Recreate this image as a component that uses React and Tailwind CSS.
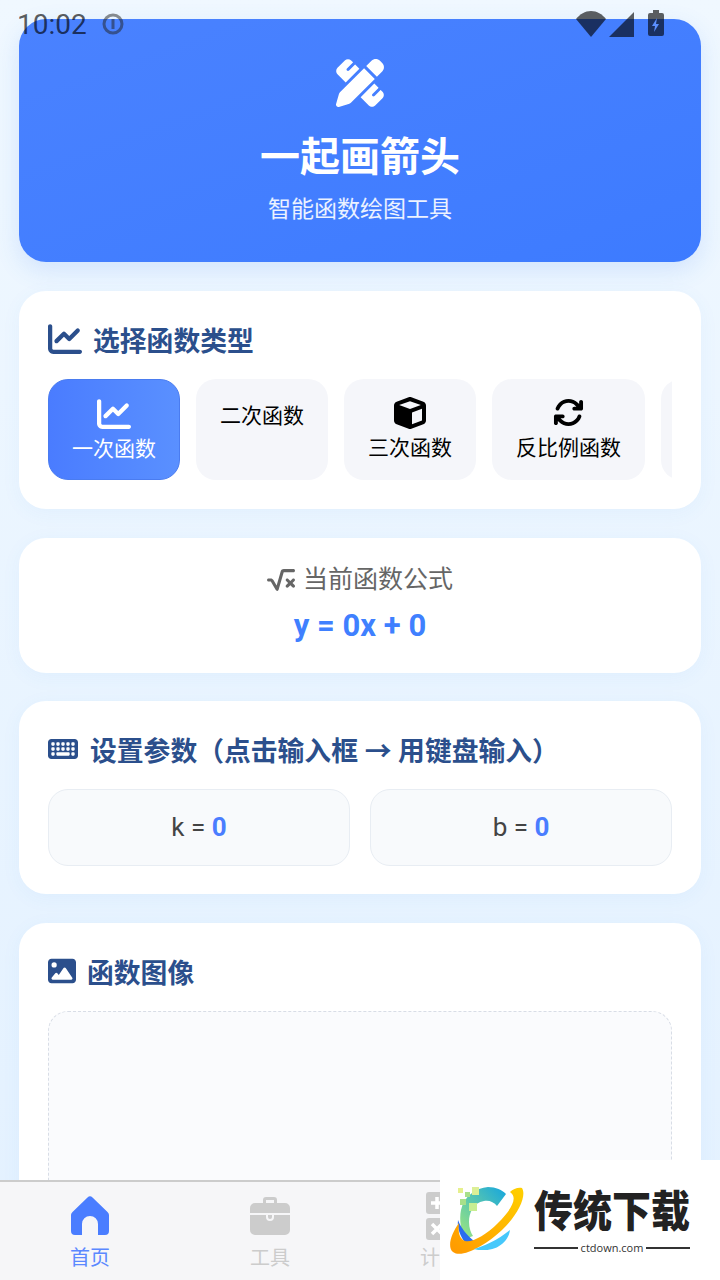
import React from 'react';
import {
  FaPenRuler,
  FaChartLine,
  FaCube,
  FaArrowsRotate,
  FaSquareRootVariable,
  FaKeyboard,
  FaImage,
} from 'react-icons/fa6';

const fontStack = "font-['Roboto','Noto_Sans_CJK_SC',sans-serif]";

const chips = [
  { label: '一次函数', Icon: FaChartLine, iconClass: 'w-[34px] h-[34px] mb-[4px]', active: true, width: 'w-[132px]' },
  { label: '二次函数', width: 'w-[132px]' },
  { label: '三次函数', Icon: FaCube, iconClass: 'w-[32px] h-[32px] my-[1px] mb-[5px]', width: 'w-[132px]' },
  { label: '反比例函数', Icon: FaArrowsRotate, iconClass: 'w-[31px] h-[31px] mt-[1px] mb-[6px]', width: 'w-[153px]' },
  { label: '', width: 'w-[132px]' },
];

// Status bar sits over the page content
const StatusBar = () => (
  <div className="absolute top-0 left-0 right-0 h-[50px] z-10">
    <div className="absolute left-[17px] top-[8px] text-[28px] leading-[34px] text-black/65 font-['Roboto',sans-serif]">10:02</div>
    <svg className="absolute left-[102px] top-[13px] opacity-50" width="22" height="22" viewBox="0 0 22 22" fill="none">
      <circle cx="11" cy="11" r="9" stroke="#222" strokeWidth="3" />
      <rect x="9.5" y="6" width="3" height="10" fill="#222" />
    </svg>
    <svg className="absolute left-[576px] top-[11px]" width="30" height="26" viewBox="0 0 30 26">
      <path d="M0 8C4 3 9 0 15 0s11 3 15 8L15 26Z" fill="#000" fillOpacity="0.62" />
    </svg>
    <svg className="absolute left-[609px] top-[12px]" width="25" height="25" viewBox="0 0 25 25">
      <path d="M25 0V25H0Z" fill="#000" fillOpacity="0.62" />
    </svg>
    <svg className="absolute left-[648px] top-[10px]" width="16" height="26" viewBox="0 0 16 26">
      <path d="M5 0h6v3h3a2 2 0 0 1 2 2v19a2 2 0 0 1-2 2H2a2 2 0 0 1-2-2V5a2 2 0 0 1 2-2h3Z" fill="#000" fillOpacity="0.62" />
      <path d="M9 8 4 16h3l-1 6 5-8H8Z" fill="#5b8fff" />
    </svg>
  </div>
);

const SectionTitle = ({ Icon, iconClass, gap, children }) => (
  <div className={`flex items-center ${gap} text-[#2b4f8c] text-[26.8px] leading-[34px] font-bold`}>
    <Icon className={iconClass} />
    <span className="whitespace-nowrap translate-y-[1px]">{children}</span>
  </div>
);

const Chip = ({ label, Icon, iconClass, active, width }) => (
  <div
    className={`${width} shrink-0 h-[101px] rounded-[20px] flex flex-col items-center pt-[17px] text-[21px] leading-[28px] ${
      active
        ? 'bg-gradient-to-r from-[#4a7cff] to-[#5a90ff] border border-[#4a7cf0] text-white'
        : 'bg-[#f5f6fa] text-black'
    }`}
  >
    {Icon ? <Icon className={iconClass} /> : <div className="h-[6px]" />}
    {label && <span>{label}</span>}
  </div>
);

const ParamBox = ({ name }) => (
  <div className="flex-1 h-[77px] rounded-[20px] bg-[#f8fafc] border border-[#e8edf3] flex items-center justify-center text-[26px] text-[#444]">
    <span>{name} =&nbsp;</span>
    <span className="font-bold text-[#4a7dff]">0</span>
  </div>
);

const HomeIcon = () => (
  <svg width="40" height="40" viewBox="0 0 40 40">
    <path
      d="M17.5 1.5a3.5 3.5 0 0 1 5 0l15 14.5a4 4 0 0 1 1.5 3.2V35a4 4 0 0 1-4 4h-7V28a8 8 0 0 0-16 0v11H5a4 4 0 0 1-4-4V19.2A4 4 0 0 1 2.5 16Z"
      fill="#4a7dff"
    />
  </svg>
);

const ToolIcon = () => (
  <svg width="40" height="38" viewBox="0 0 40 38">
    <path d="M13 6V3a3 3 0 0 1 3-3h8a3 3 0 0 1 3 3v3h8a5 5 0 0 1 5 5v5H0v-5a5 5 0 0 1 5-5Zm3-3v3h8V3Z" fill="#ccc" fillRule="evenodd" />
    <path d="M0 18h16v2a4 4 0 0 0 8 0v-2h16v15a5 5 0 0 1-5 5H5a5 5 0 0 1-5-5Z" fill="#ccc" />
    <path d="M18 18h4v2a2 2 0 0 1-4 0Z" fill="#ccc" />
  </svg>
);

const CalcIcon = () => (
  <svg width="48" height="48" viewBox="0 0 48 48">
    <rect x="0" y="0" width="22" height="22" rx="3" fill="#ccc" />
    <rect x="26" y="0" width="22" height="22" rx="3" fill="#ccc" />
    <rect x="0" y="26" width="22" height="22" rx="3" fill="#ccc" />
    <rect x="26" y="26" width="22" height="22" rx="3" fill="#ccc" />
    <path d="M11 5v12M5 11h12M6 32l10 10M16 32 6 42" stroke="#fff" strokeWidth="3.5" />
  </svg>
);

const Tab = ({ icon, label, active }) => (
  <div className={`w-[180px] flex flex-col items-center pt-[13px] ${active ? 'text-[#5b88ff]' : 'text-[#ccc]'}`}>
    <div className="h-[42px] flex items-center">{icon}</div>
    <span className="mt-[7px] text-[20px] leading-[28px]">{label}</span>
  </div>
);

// Site badge that covers the bottom right corner of the screenshot
const Watermark = () => (
  <div className="absolute right-0 bottom-0 w-[280px] h-[120px] bg-white z-20 flex items-center pl-[10px] pt-[6px]">
    <svg width="74" height="70" viewBox="0 0 74 70" className="shrink-0 mt-[-4px]">
      <defs>
        <linearGradient id="ring" x1="0" y1="1" x2="1" y2="0">
          <stop offset="0" stopColor="#a0e87c" />
          <stop offset="1" stopColor="#14a5e0" />
        </linearGradient>
        <linearGradient id="orange" x1="0" y1="1" x2="1" y2="0">
          <stop offset="0" stopColor="#ff9800" />
          <stop offset="1" stopColor="#ffd000" />
        </linearGradient>
      </defs>
      <path d="M11 24C14 10 26 2 38 1c8 0 14 3 18 7L47 20c-3-4-8-6-13-5-11 2-15 12-15 21 0 6 2 11 4 14L15 53C11 45 9 34 11 24Z" fill="url(#ring)" />
      <path d="M8 34c3 8 8 14 16 21l-8 3C10 50 7 42 8 34Z" fill="#2a6cf0" />
      <path d="M72 2c5 8-4 27-20 42C36 59 12 73 3 66c-6-5-2-18 6-29-1 9 0 15 6 18 7 2 21-6 33-18C60 25 69 12 60 6c3-3 8-5 12-4Z" fill="url(#orange)" />
      <path d="M60 44c-1 10-11 20-25 20-5 0-9 0-11-1 8-2 24-9 36-19Z" fill="#46c8fb" />
      <rect x="8" y="2" width="5" height="5" fill="#e6f08e" />
      <rect x="15" y="6" width="5" height="5" fill="#a8e08a" />
      <rect x="22" y="1" width="7" height="8" fill="#dcef96" />
      <rect x="10" y="13" width="6" height="6" fill="#a8e08a" />
      <rect x="19" y="17" width="8" height="8" fill="#c8ee92" />
    </svg>
    <div className="ml-[10px] w-[156px] flex flex-col items-center mt-[-2px]">
      <div className="text-[39px] leading-[46px] font-black text-[#222] whitespace-nowrap scale-y-[1.12]">传统下载</div>
      <div className="w-full flex items-center gap-[3px] mt-[6px]">
        <div className="flex-1 h-[2px] bg-[#333]" />
        <span className="text-[11px] leading-[14px] text-[#333] font-['Open_Sans',sans-serif]">ctdown.com</span>
        <div className="flex-1 h-[2px] bg-[#333]" />
      </div>
    </div>
  </div>
);

const App = () => {
  return (
    <div className={`${fontStack} relative w-[720px] h-[1280px] overflow-hidden flex flex-col bg-gradient-to-b from-[#f0f8ff] to-[#e3f1ff]`}>
      <StatusBar />

      <main className="flex-1 min-h-0 overflow-hidden px-[19px] pt-[19px] flex flex-col gap-[28.7px]">
        {/* Header */}
        <section className="shrink-0 h-[243px] rounded-[27px] bg-gradient-to-br from-[#4a82ff] to-[#3d7bff] shadow-[0_8px_24px_rgba(60,130,240,0.16)] flex flex-col items-center text-white">
          <FaPenRuler className="w-[48px] h-[48px] mt-[40px]" />
          <h1 className="mt-[25px] text-[40px] leading-[52px] font-bold">一起画箭头</h1>
          <p className="mt-[11px] text-[23px] leading-[30px] text-white/90">智能函数绘图工具</p>
        </section>

        {/* Function type */}
        <section className="shrink-0 h-[218.3px] rounded-[27px] bg-white shadow-[0_4px_20px_rgba(60,140,230,0.05)] px-[29px] pt-[33px]">
          <SectionTitle Icon={FaChartLine} iconClass="w-[34px] h-[34px] mt-[-3px]" gap="gap-[11px]">选择函数类型</SectionTitle>
          <div className="mt-[21px] flex gap-[16px] overflow-hidden">
            {chips.map((chip, idx) => (
              <Chip key={idx} {...chip} />
            ))}
          </div>
        </section>

        {/* Current formula */}
        <section className="shrink-0 h-[135px] rounded-[27px] bg-white shadow-[0_4px_20px_rgba(60,140,230,0.05)] flex flex-col items-center pt-[25px]">
          <div className="flex items-center gap-[8px] text-[25px] leading-[34px] text-[#666]">
            <FaSquareRootVariable className="w-[28px] h-[28px]" />
            <span>当前函数公式</span>
          </div>
          <div className="mt-[11px] text-[31px] leading-[36px] font-bold text-[#3f80ff]">y = 0x + 0</div>
        </section>

        {/* Params */}
        <section className="shrink-0 h-[193px] rounded-[27px] bg-white shadow-[0_4px_20px_rgba(60,140,230,0.05)] px-[29px] pt-[33px]">
          <SectionTitle Icon={FaKeyboard} iconClass="w-[30px] h-[30px] mt-[-5px]" gap="gap-[12px]">设置参数（点击输入框 → 用键盘输入）</SectionTitle>
          <div className="mt-[21px] flex gap-[20px]">
            <ParamBox name="k" />
            <ParamBox name="b" />
          </div>
        </section>

        {/* Graph */}
        <section className="shrink-0 h-[400px] rounded-[27px] bg-white shadow-[0_4px_20px_rgba(60,140,230,0.05)] px-[29px] pt-[33px]">
          <SectionTitle Icon={FaImage} iconClass="w-[28px] h-[28px] mt-[-5px]" gap="gap-[11px]">函数图像</SectionTitle>
          <div className="mt-[21px] h-[300px] rounded-[20px] bg-[#fafbfd] border border-dashed border-[#d8dde6]" />
        </section>
      </main>

      {/* Tab bar */}
      <nav className="shrink-0 h-[100px] relative z-10 bg-[#f6f6f8] border-t-2 border-[#cccccc] flex">
        <Tab icon={<HomeIcon />} label="首页" active />
        <Tab icon={<ToolIcon />} label="工具" />
        <Tab icon={<CalcIcon />} label="计算器" />
        <Tab icon={<div className="w-[40px]" />} label="" />
      </nav>

      <Watermark />
    </div>
  );
};

export default App;
